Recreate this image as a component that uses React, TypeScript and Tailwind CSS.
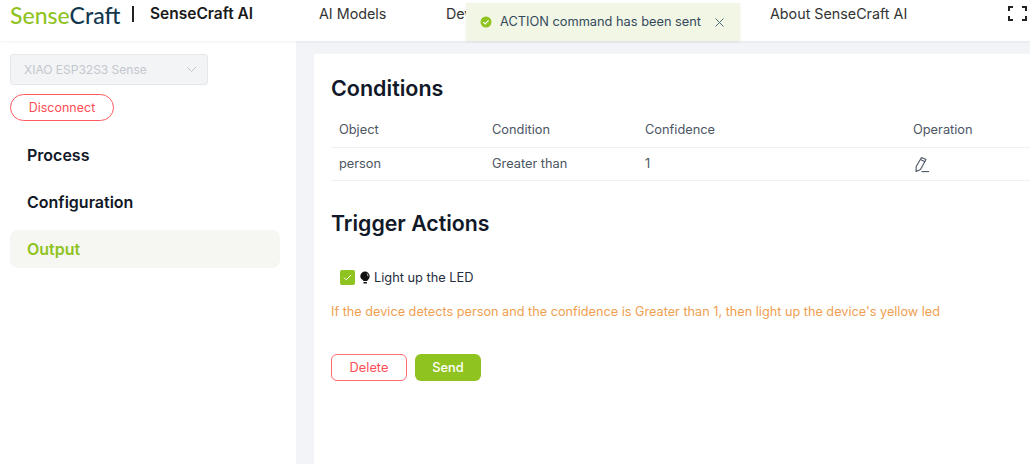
import React from "react";

const font = { fontFamily: "Inter, 'Liberation Sans', sans-serif" };

function Bulb() {
  return (
    <svg width="10" height="13" viewBox="0 0 10 13" className="mr-[4px] shrink-0">
      <path d="M5 .5a4.700 4.700 0 0 1 4.700 4.700c0 1.800-1 2.900-1.800 3.700-.4.400-.6.800-.7 1.200H3.300c-.1-.5-.4-.9-.8-1.300C1.500 8 .3 7 .3 5.200A4.700 4.700 0 0 1 5 .5z" fill="#111" />
      <path d="M3.500 11h3.400v1.500H3.500z" fill="#111" />
      <path d="M6.800 2.400c1 .6 1.200 1.700 1 2.800" stroke="#fff" strokeWidth=".8" fill="none" />
    </svg>
  );
}

function Pencil() {
  return (
    <svg width="16" height="17" viewBox="0 0 16 17" fill="none" stroke="#4b5563" strokeWidth="1.100" className="ml-[1px]">
      <path d="M7.500 1.500L12 3.500 6.500 13.500 2 15.500l.2-5z" strokeLinejoin="round" />
      <path d="M6.500 3.600L11 5.700" />
      <path d="M7.500 15.600H15" />
    </svg>
  );
}

export default function App() {
  return (
    <div className="relative flex h-[464px] w-[1030px] flex-col overflow-hidden bg-[#f3f4f8] text-[#374151]" style={font}>
      <header className="z-10 flex h-[41px] shrink-0 items-center bg-white pb-[14px] shadow-[0_1px_3px_rgba(0,0,0,0.06)]">
        <div className="ml-[10px] flex w-[309px] items-center">
          <span className="mt-[2px] w-[111px] whitespace-nowrap text-[23px] font-medium leading-[28px]" style={{ fontFamily: "Lato, sans-serif" }}>
            <span className="text-[#8fc31f]">Sense</span>
            <span className="text-[#12394f]">Craft</span>
          </span>
          <span className="ml-[11px] h-[16px] w-[2px] bg-[#222]" />
          <span className="ml-[16px] whitespace-nowrap text-[15.500px] font-semibold text-[#1a1a1a]">SenseCraft AI</span>
        </div>
        <nav className="flex flex-1 items-center text-[14.300px] text-[#333]">
          <span className="w-[127px]">AI Models</span>
          <span className="w-[324px]">Devices</span>
          <span>About SenseCraft AI</span>
        </nav>
        <svg width="19" height="15" viewBox="0 0 19 15" fill="none" stroke="#222" strokeWidth="2" className="mr-[3px]">
          <path d="M1 5V1h4M14 1h4v4M1 10v4h4M14 14h4v-4" />
        </svg>
      </header>

      <div className="absolute left-[466px] top-[3px] z-20 flex h-[38px] w-[274px] items-center bg-[#f1f7e4] pl-[14px] shadow-[0_1px_3px_rgba(0,0,0,0.06)]">
        <svg width="12" height="12" viewBox="0 0 12 12" className="mr-[8px] shrink-0">
          <circle cx="6" cy="6" r="5.500" fill="#8fc31f" />
          <path d="M3.300 6.100l1.900 1.800 3.400-3.500" stroke="#fff" strokeWidth="1.200" fill="none" />
        </svg>
        <span className="text-[12.800px] text-[#34495e]">ACTION command has been sent</span>
        <svg width="9" height="9" viewBox="0 0 9 9" className="ml-auto mr-[16px]" stroke="#4a6a7a" strokeWidth="1">
          <path d="M.5.500l8 8M8.500.500l-8 8" />
        </svg>
      </div>

      <div className="flex min-h-0 flex-1">
        <aside className="flex w-[296px] shrink-0 flex-col bg-white px-[10px] pt-[13px]">
          <div className="flex h-[31px] w-[198px] items-center justify-between rounded-[3px] border border-[#e5e7eb] bg-[#f3f4f6] pl-[13px] pr-[10px] text-[12px] text-[#c3c7ce]">
            <span>XIAO ESP32S3 Sense</span>
            <svg width="11" height="7" viewBox="0 0 11 7" fill="none" stroke="#c3c7ce" strokeWidth="1"><path d="M1 1l4.500 4.500L10 1" /></svg>
          </div>
          <button className="mt-[9px] h-[27px] w-[104px] rounded-full border border-[#ff5a5f] bg-white pt-[1px] text-[12.500px] text-[#ff4d55]">Disconnect</button>
          <nav className="mt-[15px] flex flex-col gap-[9px] text-[16px] font-semibold text-[#111827]">
            <div className="flex h-[38px] items-center pl-[17px]">Process</div>
            <div className="flex h-[38px] items-center pl-[17px]">Configuration</div>
            <div className="flex h-[38px] w-[270px] items-center rounded-[8px] bg-[#f6f7f2] pl-[17px] text-[#8fc31f]">Output</div>
          </nav>
        </aside>

        <main className="ml-[18px] mt-[13px] flex-1 bg-white pl-[17px] pt-[20px]">
          <h2 className="text-[21.500px] font-semibold leading-[28px] text-[#111827]">Conditions</h2>
          <div className="mt-[7px] text-[12.800px] text-[#4b5563]">
            <div className="flex h-[39px] items-center border-b border-[#f0f1f5] pt-[3px]">
              <span className="w-[161px] pl-[8px]">Object</span>
              <span className="w-[153px]">Condition</span>
              <span className="w-[268px]">Confidence</span>
              <span>Operation</span>
            </div>
            <div className="flex h-[33px] items-center border-b border-[#f0f1f5]">
              <span className="w-[161px] pl-[8px]">person</span>
              <span className="w-[153px]">Greater than</span>
              <span className="w-[268px]">1</span>
              <Pencil />
            </div>
          </div>
          <h2 className="mt-[28px] text-[21.300px] font-semibold leading-[28px] text-[#111827]">Trigger Actions</h2>
          <div className="ml-[9px] mt-[33px] flex h-[15px] items-center text-[12.800px] text-[#1f2d3d]">
            <span className="mr-[5px] flex h-[15px] w-[15px] items-center justify-center rounded-[2px] bg-[#8fc31f]">
              <svg width="9" height="7" viewBox="0 0 9 7" fill="none" stroke="#fff" strokeWidth="1"><path d="M1 3.500l2.300 2.300L8 1" /></svg>
            </span>
            <Bulb />
            <span>Light up the LED</span>
          </div>
          <p className="mt-[19px] whitespace-nowrap text-[12.700px] leading-[16px] text-[#f0a050]">If the device detects person and the confidence is Greater than 1, then light up the device's yellow led</p>
          <div className="mt-[34px] flex gap-[8px] text-[12.800px]">
            <button className="h-[27px] w-[76px] rounded-[6px] border border-[#ff6b70] bg-white pt-[1px] text-[#ff4d55]">Delete</button>
            <button className="h-[27px] w-[66px] rounded-[6px] bg-[#8fc31f] font-medium text-white">Send</button>
          </div>
        </main>
      </div>
    </div>
  );
}
